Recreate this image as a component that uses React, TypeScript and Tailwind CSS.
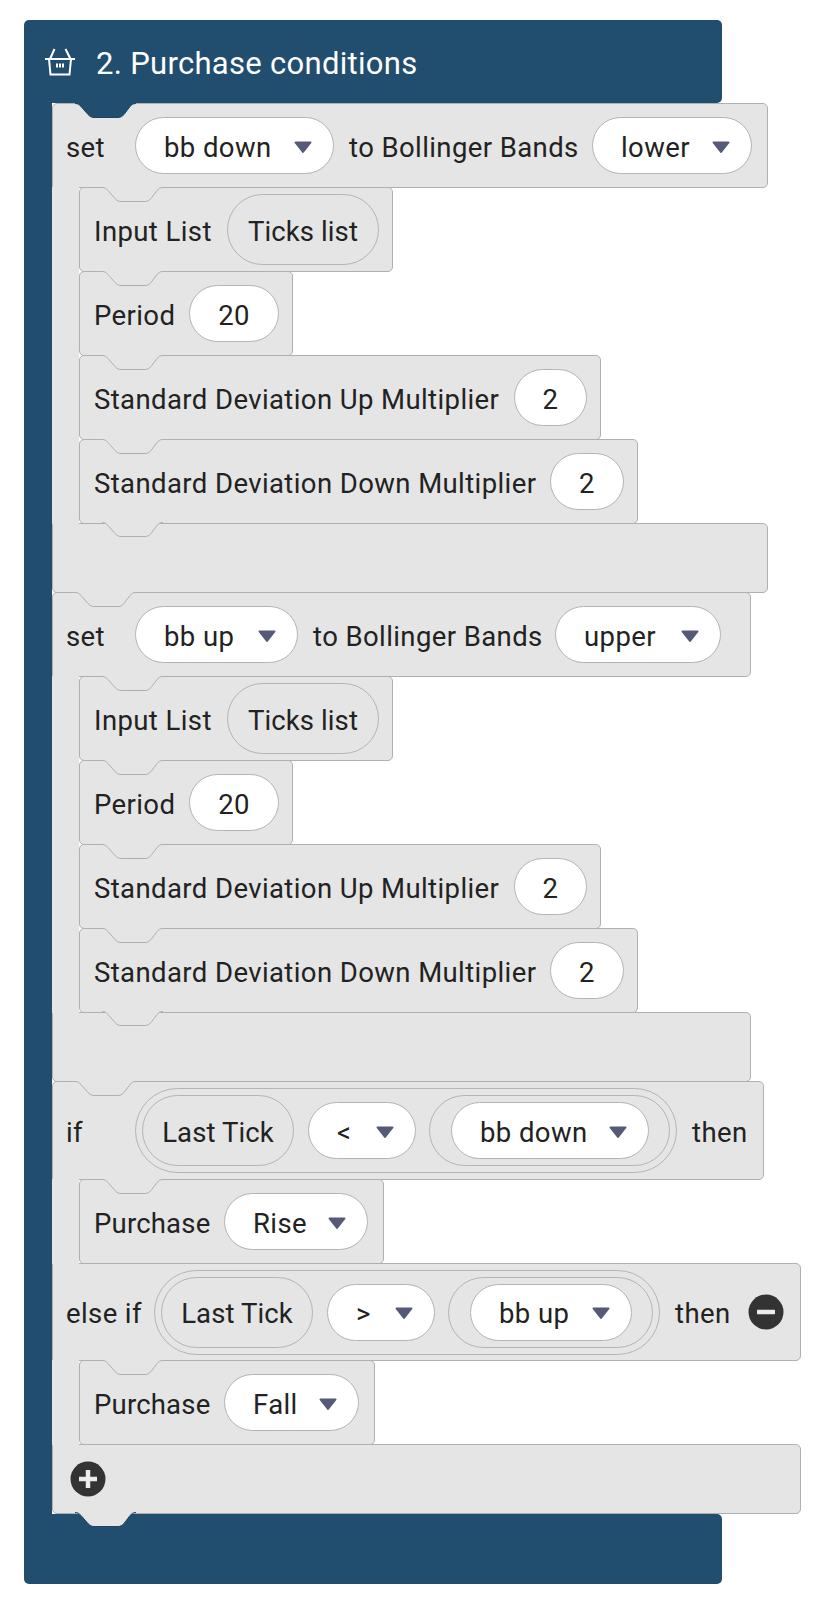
import type { ReactNode } from "react";

const fill = "#e5e5e5";
const blue = "#214e6f";
const notch = "M0 .5C3 .5 4 1.500 6 3.500L13 11.500C15 13.500 16.500 14.500 19 14.500H43C45.500 14.500 47 13.500 49 11.500L55 3.500C57 1.500 58 .5 61 .5";

function TopNotch({ behind = fill, stroke = "#b0b0b0" }: { behind?: string; stroke?: string }) {
  return (
    <svg width="61" height="16" viewBox="0 0 61 16" className="absolute left-[22px] top-[-1px] z-10">
      <path d={notch + "V0H0Z"} fill={behind} />
      <path d={notch} fill="none" stroke={stroke} />
    </svg>
  );
}

function BottomTab({ stroke = "#b0b0b0" }: { stroke?: string }) {
  return (
    <svg width="61" height="16" viewBox="0 0 61 16" className="absolute left-[22px] bottom-[-15px] z-10">
      <path d={notch + "V0H0Z"} fill={fill} />
      <path d={notch} fill="none" stroke={stroke} />
    </svg>
  );
}

function Caret() {
  return (
    <svg width="20" height="13" viewBox="0 0 20 13" className="mt-[3px] shrink-0">
      <path d="M2.500 1.500H17.500L10 11Z" fill="#565a78" stroke="#565a78" strokeWidth="2" strokeLinejoin="round" />
    </svg>
  );
}

function Label({ className = "", children }: { className?: string; children: ReactNode }) {
  return <span className={`shrink-0 whitespace-nowrap pt-[4px] ${className}`}>{children}</span>;
}

function Dropdown({ label, w }: { label: string; w: string }) {
  return (
    <div className={`flex h-[57px] shrink-0 items-center justify-between rounded-full border border-[#b4b4b4] bg-white pl-[28px] pr-[20px] ${w}`}>
      <Label>{label}</Label>
      <Caret />
    </div>
  );
}

function Field({ label, w }: { label: string; w: string }) {
  return (
    <div className={`flex h-[57px] shrink-0 items-center justify-center rounded-full border border-[#b4b4b4] bg-white ${w}`}>
      <Label>{label}</Label>
    </div>
  );
}

function Variable({ label }: { label: string }) {
  return (
    <div className="flex h-[71px] w-[152px] shrink-0 items-center justify-center rounded-full border border-[#b4b4b4] bg-[#e5e5e5] tracking-[0.1px]">
      <Label>{label}</Label>
    </div>
  );
}

function Block({ className, children, tab }: { className: string; children?: ReactNode; tab?: boolean }) {
  return (
    <div className={`relative -mt-px flex items-center rounded-[5px] border border-[#b0b0b0] bg-[#e5e5e5] first:mt-0 ${className}`}>
      <TopNotch />
      {children}
      {tab && <BottomTab />}
    </div>
  );
}

function Strip({ children }: { children: ReactNode }) {
  return <div className="relative z-[1] -my-px flex flex-col border-l-[27px] border-[#e5e5e5]">{children}</div>;
}

function Indicator() {
  return (
    <Strip>
      <Block className="h-[85px] w-[314px] pl-[14px]">
        <Label className="w-[133px]">Input List</Label>
        <Variable label="Ticks list" />
      </Block>
      <Block className="h-[85px] w-[214px] pl-[14px]">
        <Label className="w-[95px]">Period</Label>
        <Field label="20" w="w-[90px]" />
      </Block>
      <Block className="h-[85px] w-[522px] pl-[14px]">
        <Label className="w-[420px]">Standard Deviation Up Multiplier</Label>
        <Field label="2" w="w-[73px]" />
      </Block>
      <Block className="h-[85px] w-[559px] pl-[14px]" tab>
        <Label className="w-[456px]">Standard Deviation Down Multiplier</Label>
        <Field label="2" w="w-[74px]" />
      </Block>
    </Strip>
  );
}

function SetBlock({ first, name, nameW, band, bandW, to, w }: { first?: boolean; name: string; nameW: string; band: string; bandW: string; to: string; w: string }) {
  return (
    <div className="flex flex-col">
      <div className={`relative flex h-[85px] items-center rounded-[5px] rounded-bl-none border border-[#b0b0b0] bg-[#e5e5e5] pl-[13px] ${first ? "" : "-mt-px"} ${w}`}>
        {first ? <TopNotch behind={blue} stroke="#1d4563" /> : <TopNotch />}
        <Label className="w-[69px]">set</Label>
        <Dropdown label={name} w={nameW} />
        <Label className={`ml-[15px] ${to}`}>to Bollinger Bands</Label>
        <Dropdown label={band} w={bandW} />
      </div>
      <Indicator />
      <div className={`h-[70px] rounded-[5px] rounded-tl-none border border-[#b0b0b0] bg-[#e5e5e5] ${w}`} />
    </div>
  );
}

function Condition({ op, name, nameW, outerW, varW }: { op: string; name: string; nameW: string; outerW: string; varW: string }) {
  return (
    <div className={`flex h-[85px] shrink-0 items-center rounded-full border border-[#b4b4b4] pl-[6px] ${outerW}`}>
      <Variable label="Last Tick" />
      <div className="ml-[14px]">
        <Dropdown label={op} w="w-[108px]" />
      </div>
      <div className={`ml-[13px] flex h-[71px] shrink-0 items-center rounded-full border border-[#b4b4b4] pl-[21px] ${varW}`}>
        <Dropdown label={name} w={nameW} />
      </div>
    </div>
  );
}

function RoundButton({ plus }: { plus?: boolean }) {
  return (
    <svg width="36" height="36" viewBox="0 0 36 36" className="shrink-0">
      <circle cx="18" cy="18" r="17.500" fill="#333333" />
      <path d={plus ? "M18 9V27M9 18H27" : "M9 18H27"} fill="none" stroke="#ececec" strokeWidth="4.500" />
    </svg>
  );
}

function Purchase({ label, w, pillW }: { label: string; w: string; pillW: string }) {
  return (
    <Strip>
      <Block className={`h-[85px] pl-[14px] ${w}`}>
        <Label className="w-[130px] tracking-[0.2px]">Purchase</Label>
        <Dropdown label={label} w={pillW} />
      </Block>
    </Strip>
  );
}

function BasketIcon() {
  return (
    <svg width="31" height="28" viewBox="0 0 31 28" fill="none" stroke="#ffffff" strokeWidth="2" className="shrink-0">
      <path d="M0 11H30M9.500 1L5 11M20.500 1L25.500 11M4 11L5.500 26.500H24.500L26 11" />
      <path d="M12 15.500V19.500M15 15.500V19.500M18 15.500V19.500" />
    </svg>
  );
}

export default function App() {
  return (
    <div className="min-h-[1600px] bg-white pl-[24px] pt-[20px] text-[27.500px] leading-none tracking-[0.4px] text-[#222222] [font-family:Roboto,sans-serif]">
      {/* HEADER */}
      <div className="flex h-[83px] w-[698px] items-center rounded-[5px] rounded-bl-none bg-[#214e6f] pl-[21px] text-[31px] tracking-[0.3px] text-white">
        <BasketIcon />
        <Label className="ml-[20px]">2. Purchase conditions</Label>
      </div>

      {/* BLOCKS */}
      <div className="flex flex-col border-l-[28px] border-[#214e6f]">
        <SetBlock first name="bb down" nameW="w-[199px]" band="lower" bandW="w-[160px]" to="w-[243px]" w="w-[716px]" />
        <SetBlock name="bb up" nameW="w-[163px]" band="upper" bandW="w-[166px]" to="w-[242px]" w="w-[699px]" />

        <div className="flex flex-col">
          <div className="-mt-px relative flex h-[99px] w-[712px] items-center rounded-[5px] rounded-bl-none border border-[#b0b0b0] bg-[#e5e5e5] pl-[13px]">
            <TopNotch />
            <Label className="w-[69px]">if</Label>
            <Condition op="<" name="bb down" nameW="w-[198px]" outerW="w-[542px]" varW="w-[241px]" />
            <Label className="ml-[15px]">then</Label>
          </div>
          <Purchase label="Rise" w="w-[305px]" pillW="w-[144px]" />
          <div className="flex h-[98px] w-[749px] items-center rounded-[5px] rounded-l-none border border-[#b0b0b0] bg-[#e5e5e5] pl-[13px]">
            <Label className="w-[88px]">else if</Label>
            <Condition op=">" name="bb up" nameW="w-[162px]" outerW="w-[506px]" varW="w-[205px]" />
            <Label className="ml-[15px] w-[73px]">then</Label>
            <RoundButton />
          </div>
          <Purchase label="Fall" w="w-[296px]" pillW="w-[135px]" />
          <div className="relative flex h-[70px] w-[749px] items-center rounded-[5px] rounded-tl-none border border-[#b0b0b0] bg-[#e5e5e5] pl-[17px]">
            <RoundButton plus />
            <BottomTab stroke="#1d4563" />
          </div>
        </div>
      </div>

      {/* FOOTER */}
      <div className="h-[70px] w-[698px] rounded-[5px] rounded-tl-none bg-[#214e6f]" />
    </div>
  );
}
